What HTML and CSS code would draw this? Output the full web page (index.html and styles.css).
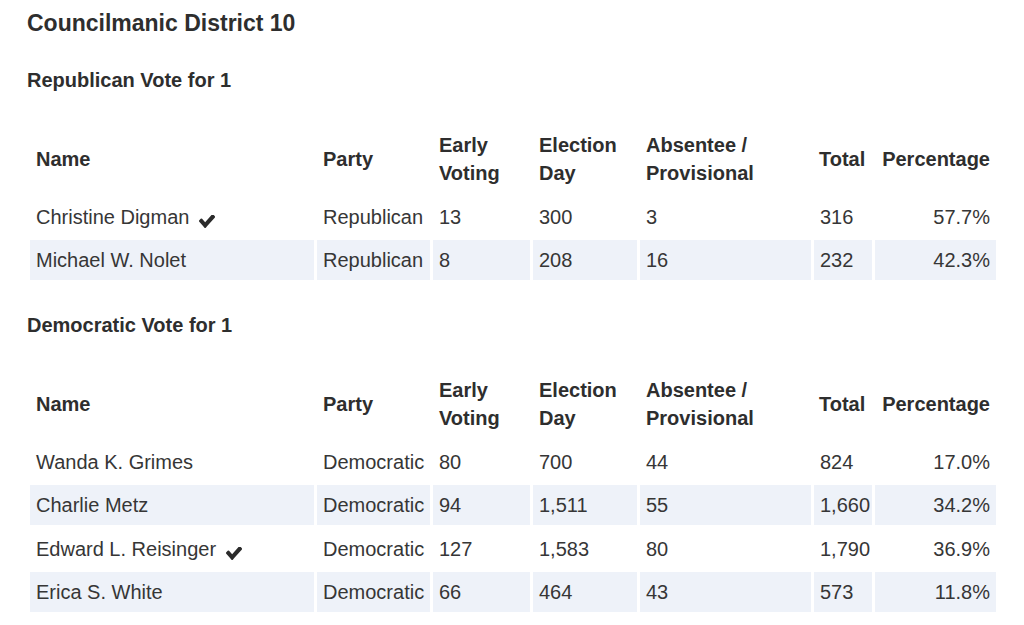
FILE: index.html
```html
<!DOCTYPE html>
<html>
<head>
<meta charset="utf-8">
<link rel="stylesheet" href="styles.css">
</head>
<body>
<div class="page">
  <h1 class="title">Councilmanic District 10</h1>

  <h2 class="race">Republican Vote for 1</h2>
  <table class="results">
    <colgroup>
      <col class="c-name"><col class="c-party"><col class="c-early"><col class="c-eday"><col class="c-abs"><col class="c-total"><col class="c-pct">
    </colgroup>
    <thead>
      <tr>
        <th>Name</th><th>Party</th><th>Early<br>Voting</th><th>Election<br>Day</th><th>Absentee /<br>Provisional</th><th class="num">Total</th><th class="pct">Percentage</th>
      </tr>
    </thead>
    <tbody>
      <tr>
        <td>Christine Digman<svg class="check" viewBox="121 402 1550 1124" preserveAspectRatio="none"><path d="M1671 566q0 40-28 68l-724 724-136 136q-28 28-68 28t-68-28l-136-136-362-362q-28-28-28-68t28-68l136-136q28-28 68-28t68 28l294 295 656-657q28-28 68-28t68 28l136 136q28 28 28 68z"/></svg></td>
        <td>Republican</td><td>13</td><td>300</td><td>3</td><td>316</td><td class="pct">57.7%</td>
      </tr>
      <tr>
        <td>Michael W. Nolet</td><td>Republican</td><td>8</td><td>208</td><td>16</td><td>232</td><td class="pct">42.3%</td>
      </tr>
    </tbody>
  </table>

  <h2 class="race">Democratic Vote for 1</h2>
  <table class="results">
    <colgroup>
      <col class="c-name"><col class="c-party"><col class="c-early"><col class="c-eday"><col class="c-abs"><col class="c-total"><col class="c-pct">
    </colgroup>
    <thead>
      <tr>
        <th>Name</th><th>Party</th><th>Early<br>Voting</th><th>Election<br>Day</th><th>Absentee /<br>Provisional</th><th class="num">Total</th><th class="pct">Percentage</th>
      </tr>
    </thead>
    <tbody>
      <tr>
        <td>Wanda K. Grimes</td><td>Democratic</td><td>80</td><td>700</td><td>44</td><td>824</td><td class="pct">17.0%</td>
      </tr>
      <tr>
        <td>Charlie Metz</td><td>Democratic</td><td>94</td><td>1,511</td><td>55</td><td>1,660</td><td class="pct">34.2%</td>
      </tr>
      <tr>
        <td>Edward L. Reisinger<svg class="check" viewBox="121 402 1550 1124" preserveAspectRatio="none"><path d="M1671 566q0 40-28 68l-724 724-136 136q-28 28-68 28t-68-28l-136-136-362-362q-28-28-28-68t28-68l136-136q28-28 68-28t68 28l294 295 656-657q28-28 68-28t68 28l136 136q28 28 28 68z"/></svg></td>
        <td>Democratic</td><td>127</td><td>1,583</td><td>80</td><td>1,790</td><td class="pct">36.9%</td>
      </tr>
      <tr>
        <td>Erica S. White</td><td>Democratic</td><td>66</td><td>464</td><td>43</td><td>573</td><td class="pct">11.8%</td>
      </tr>
    </tbody>
  </table>
</div>
</body>
</html>
```

FILE: styles.css
```css
html, body {
  margin: 0;
  padding: 0;
  background: #ffffff;
}

body {
  font-family: "Liberation Sans", Arial, Helvetica, sans-serif;
  color: #333333;
  font-size: 20px;
}

.page {
  padding: 9px 0 0 27px;
}

.title {
  margin: 0 0 29px;
  font-size: 23px;
  line-height: 28px;
  font-weight: bold;
  color: #2e2e2e;
}

.race {
  margin: 0 0 26.75px;
  font-size: 20px;
  line-height: 29px;
  font-weight: bold;
  color: #2e2e2e;
}

.results {
  table-layout: fixed;
  width: 972px;
  border-collapse: separate;
  border-spacing: 3px;
  margin: 0 0 27.75px;
}

.c-name { width: 284px; }
.c-party { width: 113px; }
.c-early { width: 97px; }
.c-eday { width: 104px; }
.c-abs { width: 171px; }
.c-total { width: 58px; }
.c-pct { width: 121px; }

.results th,
.results td {
  padding: 6.25px 6px;
  line-height: 28px;
  text-align: left;
  vertical-align: middle;
  white-space: nowrap;
}

.results th {
  font-weight: bold;
  color: #2e2e2e;
}

.results td {
  font-weight: normal;
  color: #363636;
}

.results th.pct,
.results td.pct {
  text-align: right;
}

.results th.num {
  padding-left: 5px;
}

.results tbody tr:nth-child(even) td {
  background: #eef2f9;
}

.check {
  width: 16px;
  height: 13px;
  margin-left: 10px;
  vertical-align: -4px;
  fill: #2b2b2b;
}
```
